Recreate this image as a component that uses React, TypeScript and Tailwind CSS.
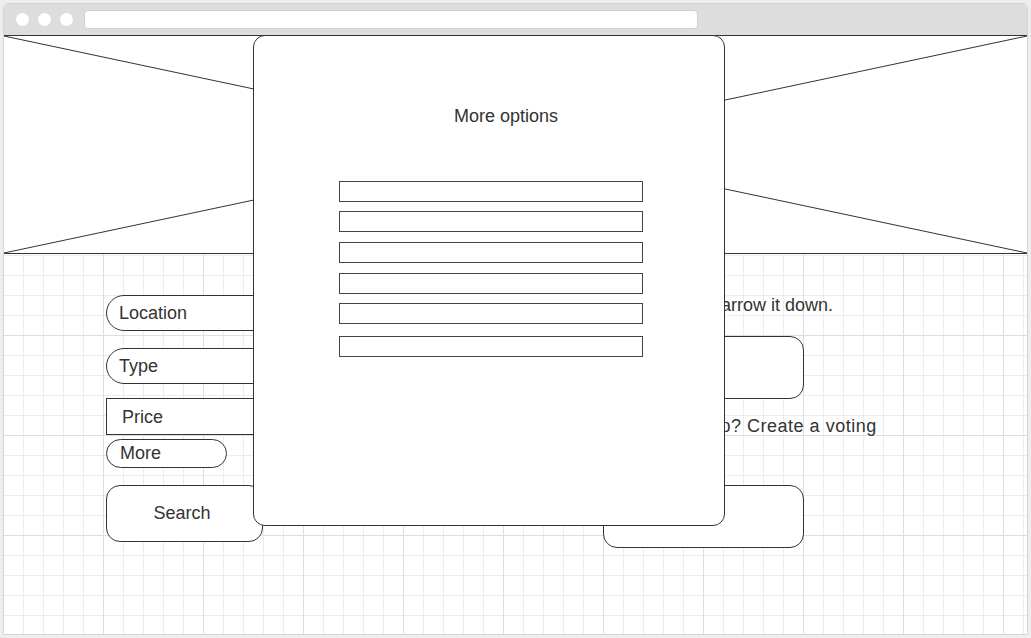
export default function App() {
  const font = "font-['Liberation_Sans',Arial,sans-serif]";

  return (
    <div className={`w-[1031px] h-[638px] bg-[#eeeeee] pt-[3px] pl-[3px] ${font} text-[#333]`}>
      <div className="w-[1025px] h-[632px] flex flex-col rounded-t-[6px] border border-[#d4d4d4] overflow-hidden">
        {/* browser chrome */}
        <div className="h-[31px] shrink-0 bg-[#dddddd] flex items-center pl-[12px]">
          <div className="flex gap-[9px]">
            <span className="w-[13px] h-[13px] rounded-full bg-white" />
            <span className="w-[13px] h-[13px] rounded-full bg-white" />
            <span className="w-[13px] h-[13px] rounded-full bg-white" />
          </div>
          <div className="ml-[11px] w-[614px] h-[19px] bg-white rounded-[4px] border border-[#d0d0d0]" />
        </div>

        {/* page */}
        <div className="relative flex-1 bg-white bg-[linear-gradient(#dedede_1px,transparent_1px),linear-gradient(90deg,#dedede_1px,transparent_1px),linear-gradient(#ececec_1px,transparent_1px),linear-gradient(90deg,#ececec_1px,transparent_1px)] [background-size:100px_100px,100px_100px,20px_20px,20px_20px] [background-position:-1px_0]">
          {/* hero placeholder */}
          <div className="relative h-[219px] w-[1025px] -ml-px border border-[#333] bg-white">
            <svg className="absolute inset-0 w-full h-full" viewBox="0 0 100 100" preserveAspectRatio="none">
              <line x1="0" y1="0" x2="100" y2="100" stroke="#333" strokeWidth="1" vectorEffect="non-scaling-stroke" />
              <line x1="0" y1="100" x2="100" y2="0" stroke="#333" strokeWidth="1" vectorEffect="non-scaling-stroke" />
            </svg>
          </div>

          <div className="flex pl-[102px] pt-[41px]">
            {/* search form */}
            <div className="w-[300px] flex flex-col text-[18px]">
              <div className="h-[36px] rounded-full border border-[#333] bg-white flex items-center pl-[12px]">Location</div>
              <div className="mt-[17px] h-[36px] rounded-full border border-[#333] bg-white flex items-center pl-[12px]">Type</div>
              <div className="mt-[14px] h-[37px] border border-[#333] bg-white flex items-center pl-[15px] pt-[1px]">Price</div>
              <div className="mt-[4px] w-[121px] h-[29px] rounded-full border border-[#333] bg-white flex items-center pl-[13px]">More</div>
              <div className="mt-[17px] w-[157px] h-[57px] rounded-[14px] border border-[#333] bg-white flex items-center justify-center pr-[5px]">Search</div>
            </div>

            {/* side actions */}
            <div className="ml-[197px] w-[300px] flex flex-col text-[18px] leading-[21px]">
              <p className="whitespace-nowrap pl-[3px]">Use filters to narrow it down.</p>
              <div className="mt-[20px] w-[201px] h-[63px] rounded-[14px] border border-[#333] bg-white" />
              <p className="mt-[17px] whitespace-nowrap tracking-[0.5px] pl-[2px]">
                Out as a group? Create a voting
                <br />
                poll
              </p>
              <div className="mt-[27px] w-[201px] h-[63px] rounded-[14px] border border-[#333] bg-white" />
            </div>
          </div>

          {/* modal */}
          <div className="absolute left-[249px] top-0 w-[472px] h-[491px] rounded-[12px] border border-[#333] bg-white flex flex-col">
            <div className="mt-[70px] pl-[34px] flex justify-center text-[18px] leading-[21px]">More options</div>
            <div className="mt-[54px] ml-[85px] w-[304px] flex flex-col">
              <div className="h-[21px] border border-[#444]" />
              <div className="mt-[9px] h-[21px] border border-[#444]" />
              <div className="mt-[10px] h-[21px] border border-[#444]" />
              <div className="mt-[10px] h-[21px] border border-[#444]" />
              <div className="mt-[9px] h-[21px] border border-[#444]" />
              <div className="mt-[12px] h-[21px] border border-[#444]" />
            </div>
          </div>
        </div>
      </div>
    </div>
  );
}
